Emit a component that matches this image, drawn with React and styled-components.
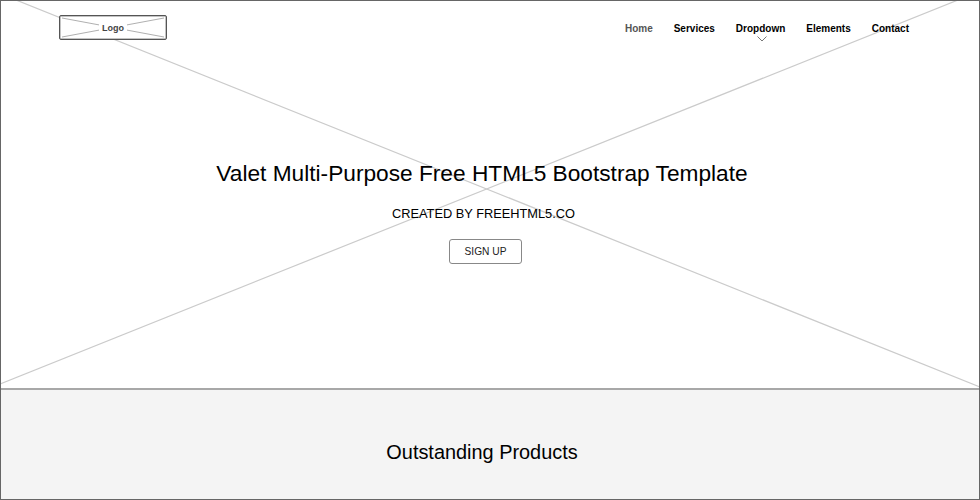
import React from 'react';
import styled, { createGlobalStyle } from 'styled-components';

const GlobalStyle = createGlobalStyle`
  html, body {
    margin: 0;
    padding: 0;
    background: #fff;
  }
  body {
    font-family: "Liberation Sans", Arial, sans-serif;
    color: #000;
  }
`;

const Frame = styled.div`
  width: 980px;
  height: 500px;
  box-sizing: border-box;
  border: 1px solid #666;
  overflow: hidden;
  display: flex;
  flex-direction: column;
`;

const Hero = styled.header`
  position: relative;
  height: 387px;
  flex-shrink: 0;
  border-bottom: 2px solid #a8a8a8;
  box-sizing: content-box;
  display: flex;
  flex-direction: column;
`;

const CrossLines = styled.svg`
  position: absolute;
  top: -1px;
  left: -1px;
  width: 980px;
  height: 388px;
`;

const Nav = styled.nav`
  position: relative;
  display: flex;
  align-items: flex-start;
  justify-content: space-between;
  padding: 14px 70px 0 58px;
`;

const Logo = styled.div`
  position: relative;
  width: 108px;
  height: 25px;
  box-sizing: border-box;
  border: 1px solid #555;
  box-shadow: inset 0 0 0 0.5px #888;
  border-radius: 2px;
  background: #fff;
  display: flex;
  align-items: center;
  justify-content: center;
`;

const LogoCross = styled.svg`
  position: absolute;
  inset: 0;
  width: 100%;
  height: 100%;
`;

const LogoText = styled.span`
  position: relative;
  padding: 0 3px;
  background: #fff;
  font-size: 9px;
  font-weight: 700;
  color: #444;
`;

const Menu = styled.ul`
  display: flex;
  gap: 21px;
  list-style: none;
  margin: 0;
  padding: 7px 0 0;
`;

const MenuItem = styled.li`
  position: relative;
  font-size: 10px;
  line-height: 13px;
  font-weight: 700;
  color: ${p => (p.$active ? '#555' : '#000')};
`;

const Caret = styled.svg`
  position: absolute;
  left: 50%;
  top: 14px;
  margin-left: -4px;
  width: 10px;
  height: 6px;
`;

const HeroBody = styled.div`
  position: relative;
  display: flex;
  flex-direction: column;
  align-items: center;
  padding-top: 119px;
  padding-right: 16px;
`;

const Title = styled.h1`
  margin: 0;
  font-size: 22.7px;
  line-height: 28px;
  font-weight: 400;
`;

const Subtitle = styled.p`
  margin: 19px 0 0 3px;
  font-size: 12.8px;
  line-height: 16px;
`;

const SignUp = styled.button`
  margin: 17px 0 0 7px;
  width: 73px;
  height: 25px;
  padding: 0;
  font-family: inherit;
  font-size: 10.2px;
  color: #222;
  background: #fff;
  border: 1px solid #888;
  border-radius: 3px;
`;

const Products = styled.section`
  flex: 1;
  background: #f4f4f4;
  display: flex;
  justify-content: center;
  padding: 50px 16px 0 0;
`;

const ProductsTitle = styled.h2`
  margin: 0;
  font-size: 19.9px;
  line-height: 24px;
  font-weight: 400;
`;

const links = ['Home', 'Services', 'Dropdown', 'Elements', 'Contact'];

export default function App() {
  return (
    <>
      <GlobalStyle />
      <Frame>
        <Hero>
          <CrossLines viewBox="0 0 980 388">
            <line x1="16" y1="0" x2="980" y2="387" stroke="#cbcbcb" strokeWidth="1.2" />
            <line x1="958" y1="0" x2="0" y2="384" stroke="#cbcbcb" strokeWidth="1.2" />
          </CrossLines>
          <Nav>
            <Logo>
              <LogoCross viewBox="0 0 106 23">
                <line x1="2" y1="2" x2="104" y2="21" stroke="#b0b0b0" />
                <line x1="104" y1="2" x2="2" y2="21" stroke="#b0b0b0" />
              </LogoCross>
              <LogoText>Logo</LogoText>
            </Logo>
            <Menu>
              {links.map(link => (
                <MenuItem key={link} $active={link === 'Home'}>
                  {link}
                  {link === 'Dropdown' && (
                    <Caret viewBox="0 0 10 6">
                      <path d="M0.5 0.5 L5 5 L9.5 0.5" fill="none" stroke="#777" />
                    </Caret>
                  )}
                </MenuItem>
              ))}
            </Menu>
          </Nav>
          <HeroBody>
            <Title>Valet Multi-Purpose Free HTML5 Bootstrap Template</Title>
            <Subtitle>CREATED BY FREEHTML5.CO</Subtitle>
            <SignUp>SIGN UP</SignUp>
          </HeroBody>
        </Hero>
        <Products>
          <ProductsTitle>Outstanding Products</ProductsTitle>
        </Products>
      </Frame>
    </>
  );
}
